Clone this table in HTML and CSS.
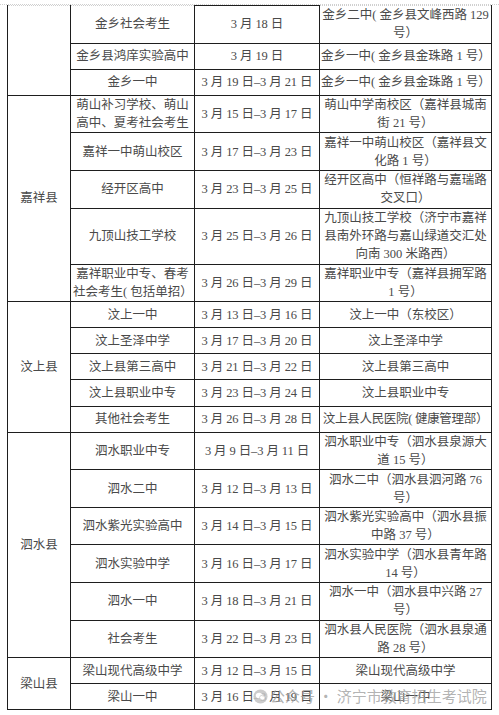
FILE: index.html
```html
<!DOCTYPE html>
<html lang="zh-CN">
<head>
<meta charset="utf-8">
<title>考点安排</title>
<link rel="stylesheet" href="styles.css">
</head>
<body>
<div class="page">
  <div class="topline"></div>
  <table class="sched">
    <colgroup>
      <col class="c-county">
      <col class="c-school">
      <col class="c-date">
      <col class="c-place">
    </colgroup>
    <tbody>
      <tr class="r2 first">
        <td rowspan="3" class="county"></td>
        <td>金乡社会考生</td>
        <td class="date">3 月 18 日</td>
        <td class="place">金乡二中( 金乡县文峰西路 129<br>号）</td>
      </tr>
      <tr class="r1">
        <td>金乡县鸿庠实验高中</td>
        <td class="date">3 月 19 日</td>
        <td class="place">金乡一中( 金乡县金珠路 1 号）</td>
      </tr>
      <tr class="r1">
        <td>金乡一中</td>
        <td class="date">3 月 19 日–3 月 21 日</td>
        <td class="place">金乡一中( 金乡县金珠路 1 号）</td>
      </tr>

      <tr class="r2">
        <td rowspan="5" class="county">嘉祥县</td>
        <td>萌山补习学校、萌山<br>高中、夏考社会考生</td>
        <td class="date">3 月 15 日–3 月 17 日</td>
        <td class="place">萌山中学南校区（嘉祥县城南<br>街 21 号）</td>
      </tr>
      <tr class="r2">
        <td>嘉祥一中萌山校区</td>
        <td class="date">3 月 17 日–3 月 23 日</td>
        <td class="place">嘉祥一中萌山校区（嘉祥县文<br>化路 1 号）</td>
      </tr>
      <tr class="r2">
        <td>经开区高中</td>
        <td class="date">3 月 23 日–3 月 25 日</td>
        <td class="place">经开区高中（恒祥路与嘉瑞路<br>交叉口）</td>
      </tr>
      <tr class="r3">
        <td>九顶山技工学校</td>
        <td class="date">3 月 25 日–3 月 26 日</td>
        <td class="place">九顶山技工学校（济宁市嘉祥<br>县南外环路与嘉山绿道交汇处<br>向南 300 米路西）</td>
      </tr>
      <tr class="r2">
        <td>嘉祥职业中专、春考<br>社会考生( 包括单招）</td>
        <td class="date">3 月 26 日–3 月 29 日</td>
        <td class="place">嘉祥职业中专（嘉祥县拥军路<br>1 号）</td>
      </tr>

      <tr class="r1">
        <td rowspan="5" class="county">汶上县</td>
        <td>汶上一中</td>
        <td class="date">3 月 13 日–3 月 16 日</td>
        <td class="place">汶上一中（东校区）</td>
      </tr>
      <tr class="r1">
        <td>汶上圣泽中学</td>
        <td class="date">3 月 17 日–3 月 20 日</td>
        <td class="place">汶上圣泽中学</td>
      </tr>
      <tr class="r1">
        <td>汶上县第三高中</td>
        <td class="date">3 月 21 日–3 月 22 日</td>
        <td class="place">汶上县第三高中</td>
      </tr>
      <tr class="r1">
        <td>汶上县职业中专</td>
        <td class="date">3 月 23 日–3 月 24 日</td>
        <td class="place">汶上县职业中专</td>
      </tr>
      <tr class="r1">
        <td>其他社会考生</td>
        <td class="date">3 月 26 日–3 月 28 日</td>
        <td class="place tight">汶上县人民医院( 健康管理部）</td>
      </tr>

      <tr class="r2">
        <td rowspan="6" class="county">泗水县</td>
        <td>泗水职业中专</td>
        <td class="date">3 月 9 日–3 月 11 日</td>
        <td class="place">泗水职业中专（泗水县泉源大<br>道 15 号）</td>
      </tr>
      <tr class="r2">
        <td>泗水二中</td>
        <td class="date">3 月 12 日–3 月 13 日</td>
        <td class="place">泗水二中（泗水县泗河路 76<br>号）</td>
      </tr>
      <tr class="r2">
        <td>泗水紫光实验高中</td>
        <td class="date">3 月 14 日–3 月 15 日</td>
        <td class="place">泗水紫光实验高中（泗水县振<br>中路 37 号）</td>
      </tr>
      <tr class="r2">
        <td>泗水实验中学</td>
        <td class="date">3 月 16 日–3 月 17 日</td>
        <td class="place">泗水实验中学（泗水县青年路<br>14 号）</td>
      </tr>
      <tr class="r2">
        <td>泗水一中</td>
        <td class="date">3 月 18 日–3 月 21 日</td>
        <td class="place">泗水一中（泗水县中兴路 27<br>号）</td>
      </tr>
      <tr class="r2">
        <td>社会考生</td>
        <td class="date">3 月 22 日–3 月 23 日</td>
        <td class="place">泗水县人民医院（泗水县泉通<br>路 28 号）</td>
      </tr>

      <tr class="r1">
        <td rowspan="2" class="county">梁山县</td>
        <td>梁山现代高级中学</td>
        <td class="date">3 月 12 日–3 月 15 日</td>
        <td class="place">梁山现代高级中学</td>
      </tr>
      <tr class="r1 last">
        <td>梁山一中</td>
        <td class="date">3 月 16 日–3 月 19 日</td>
        <td class="place">梁山一中</td>
      </tr>
    </tbody>
  </table>

  <div class="watermark">
    <svg class="wm-icon" viewBox="0 0 16 16" width="15" height="15" aria-hidden="true">
      <circle cx="8" cy="8" r="7.5" fill="#c4c4c4"/>
      <ellipse cx="6.6" cy="7" rx="3.6" ry="3" fill="#fff"/>
      <ellipse cx="10" cy="9.2" rx="3" ry="2.5" fill="#fff" stroke="#c4c4c4" stroke-width="0.8"/>
    </svg>
    <span>公众号 · 济宁市教育招生考试院</span>
  </div>
</div>
</body>
</html>
```

FILE: styles.css
```css
html, body {
  margin: 0;
  padding: 0;
  background: #ffffff;
}

.page {
  position: relative;
  width: 499px;
  height: 715px;
  padding: 5px 0 0 7px;
  box-sizing: border-box;
  overflow: hidden;
}

.topline {
  position: absolute;
  left: 0;
  top: 4px;
  width: 499px;
  border-top: 1px dotted #d0d0d0;
}

.sched {
  position: relative;
  border-collapse: collapse;
  table-layout: fixed;
  width: 484px;
  font-family: "Liberation Serif", "Noto Sans CJK SC", serif;
  font-size: 12.5px;
  font-weight: 400;
  line-height: 18px;
  color: #4a4a4a;
}

.c-county { width: 63px; }
.c-school { width: 124px; }
.c-date { width: 125px; }
.c-place { width: 172px; }

.sched td {
  border: 1px solid #1e1e1e;
  padding: 0 2px;
  text-align: center;
  vertical-align: middle;
  white-space: nowrap;
  overflow: hidden;
}

.sched tr.first td {
  border-top: 1px dotted #cfcfcf;
}

.sched tr.first td.date {
  border-top: 1px solid #1e1e1e;
}

.r1 { height: 26.1px; }
.r2 { height: 37.6px; }
.r3 { height: 56px; }

.sched td.county {
  padding: 0;
}

.sched td.date {
  letter-spacing: -0.1px;
}

.sched td.place {
  padding: 0 1px;
}

.sched td.tight {
  letter-spacing: -0.3px;
}

.watermark {
  position: absolute;
  left: 253px;
  top: 686px;
  display: flex;
  align-items: center;
  gap: 2px;
  font-family: "Noto Sans CJK SC", sans-serif;
  font-size: 15px;
  line-height: 20px;
  color: rgba(160, 160, 160, 0.8);
  white-space: nowrap;
}

.wm-icon {
  flex: none;
  opacity: 0.85;
}
```
